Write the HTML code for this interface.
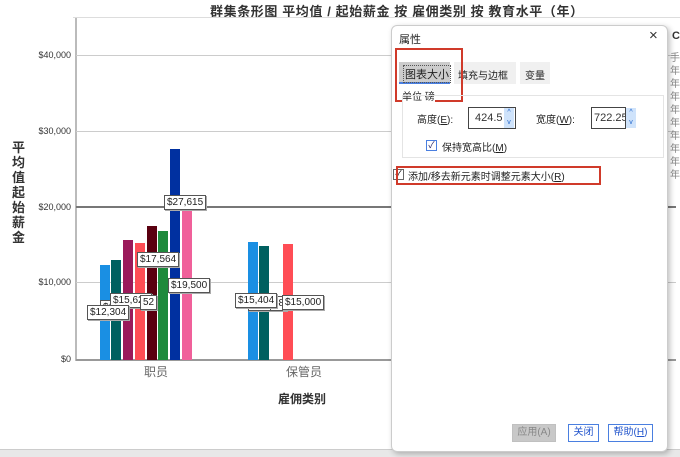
<!DOCTYPE html>
<html><head><meta charset="utf-8"><style>
*{margin:0;padding:0;box-sizing:border-box}
body{width:680px;height:457px;background:#fff;position:relative;overflow:hidden;font-family:"Liberation Sans","Noto Sans CJK SC",sans-serif;}
.a{position:absolute}
.grid{position:absolute;left:76px;width:600px;height:1px;background:#ccc}
.ylab{position:absolute;right:609px;font-size:9px;color:#333;text-align:right;width:60px}
.bar{position:absolute;width:10px;bottom:97px}
.tag{position:absolute;font-size:10px;background:#fff;border:1px solid #555;padding:0 2px;color:#222;line-height:13px;box-shadow:1px 1px 0 #aaa}
.btn{position:absolute;font-size:10px;height:18px;line-height:16px;text-align:center;border:1px solid #4a7fe0;color:#2255cc;background:#fff}
.yr{position:absolute;left:670px;font-size:10px;color:#888}
</style></head><body>
<div class="a" style="left:210px;top:1px;font-size:13px;font-weight:bold;color:#333;letter-spacing:0.6px;white-space:nowrap">群集条形图 平均值 / 起始薪金 按 雇佣类别 按 教育水平（年）</div>
<div class="a" style="left:73px;top:17px;width:620px;height:1px;background:#ddd"></div>
<div class="a" style="left:75px;top:18px;width:2px;height:343px;background:#bbb"></div>
<div class="grid" style="top:55px"></div>
<div class="grid" style="top:131px"></div>
<div class="grid" style="top:206px;height:2px;background:#777"></div>
<div class="grid" style="top:282px"></div>
<div class="a" style="left:76px;top:359px;width:600px;height:2px;background:#999"></div>
<div class="ylab" style="top:50px">$40,000</div>
<div class="ylab" style="top:126px">$30,000</div>
<div class="ylab" style="top:202px">$20,000</div>
<div class="ylab" style="top:277px">$10,000</div>
<div class="ylab" style="top:354px">$0</div>
<div class="a" style="left:12px;top:140px;width:14px;font-size:13px;font-weight:bold;line-height:15px;color:#333">平均值起始薪金</div>
<div class="bar" style="left:100px;top:265px;background:#1a8fe3"></div>
<div class="bar" style="left:111px;top:260px;background:#006060"></div>
<div class="bar" style="left:123px;top:240px;background:#9b1a5a"></div>
<div class="bar" style="left:135px;top:243px;background:#ff4d55"></div>
<div class="bar" style="left:147px;top:226px;background:#5a0010"></div>
<div class="bar" style="left:158px;top:231px;background:#1e8a3c"></div>
<div class="bar" style="left:170px;top:149px;background:#0030a0"></div>
<div class="bar" style="left:182px;top:210px;background:#f0609a"></div>
<div class="bar" style="left:248px;top:242px;background:#1a8fe3"></div>
<div class="bar" style="left:259px;top:246px;background:#006060"></div>
<div class="bar" style="left:283px;top:244px;background:#ff4d55"></div>
<div class="tag" style="left:100px;top:300px">$13</div>
<div class="tag" style="left:110px;top:293px">$15,625</div>
<div class="tag" style="left:140px;top:295px">52</div>
<div class="tag" style="left:87px;top:305px">$12,304</div>
<div class="tag" style="left:137px;top:252px">$17,564</div>
<div class="tag" style="left:168px;top:278px">$19,500</div>
<div class="tag" style="left:164px;top:195px">$27,615</div>
<div class="tag" style="left:248px;top:296px">$15,</div>
<div class="tag" style="left:270px;top:296px">58</div>
<div class="tag" style="left:282px;top:295px">$15,000</div>
<div class="tag" style="left:235px;top:293px">$15,404</div>
<div class="a" style="left:144px;top:363px;font-size:12px;color:#666">职员</div>
<div class="a" style="left:286px;top:363px;font-size:12px;color:#666">保管员</div>
<div class="a" style="left:278px;top:390px;font-size:12px;font-weight:bold;color:#333">雇佣类别</div>
<div class="a" style="left:0;top:449px;width:680px;height:8px;background:#e8e8e8;border-top:1px solid #ccc"></div>
<div class="a" style="left:672px;top:30px;font-size:11px;font-weight:bold;color:#333">C</div>
<div class="yr" style="top:49px">手</div><div class="yr" style="top:62px">年</div><div class="yr" style="top:75px">年</div><div class="yr" style="top:88px">年</div><div class="yr" style="top:101px">年</div><div class="yr" style="top:114px">年</div><div class="yr" style="top:127px">年</div><div class="yr" style="top:140px">年</div><div class="yr" style="top:153px">年</div><div class="yr" style="top:166px">年</div>
<div class="a" style="left:391px;top:25px;width:277px;height:427px;background:#fff;border:1px solid #ccc;border-radius:6px;box-shadow:2px 2px 6px rgba(0,0,0,.25)">
 <div class="a" style="left:7px;top:5px;font-size:11px;color:#222">属性</div>
 <div class="a" style="left:257px;top:1px;font-size:15px;color:#333">×</div>
 <div class="a" style="left:7px;top:36px;width:51px;height:22px;background:#ccc;border-bottom:2px solid #4a7fe0"></div>
 <div class="a" style="left:11px;top:39px;font-size:11px;color:#222;border:1px dotted #555;padding:0 1px">图表大小</div>
 <div class="a" style="left:62px;top:36px;width:62px;height:22px;background:#f0f0f0"></div>
 <div class="a" style="left:66px;top:41px;font-size:10px;color:#222">填充与边框</div>
 <div class="a" style="left:128px;top:36px;width:30px;height:22px;background:#f0f0f0"></div>
 <div class="a" style="left:133px;top:41px;font-size:10px;color:#222">变量</div>
 <div class="a" style="left:3px;top:22px;width:68px;height:54px;border:2px solid #d03a2a"></div>
 <div class="a" style="left:10px;top:62px;font-size:10px;color:#222;background:#fff">单位 磅</div>
 <div class="a" style="left:10px;top:69px;width:262px;height:63px;border:1px solid #e4e4e4"></div>
 <div class="a" style="left:25px;top:85px;font-size:10px;color:#222">高度(<u>E</u>):</div>
 <div class="a" style="left:76px;top:81px;width:48px;height:22px;border:1px solid #444;font-size:11px;padding:4px 0 0 6px;color:#333">424.5</div>
 <div class="a" style="left:112px;top:82px;width:10px;height:20px;background:#cfe3fb;font-size:7px;color:#26c;text-align:center;line-height:10px">^<br>v</div>
 <div class="a" style="left:144px;top:85px;font-size:10px;color:#222">宽度(<u>W</u>):</div>
 <div class="a" style="left:199px;top:81px;width:35px;height:22px;border:1px solid #444;font-size:11px;padding:4px 0 0 2px;color:#333;overflow:hidden">722.25</div>
 <div class="a" style="left:234px;top:82px;width:10px;height:20px;background:#cfe3fb;font-size:7px;color:#26c;text-align:center;line-height:10px">^<br>v</div>
 <div class="a" style="left:34px;top:114px;width:11px;height:11px;border:1px solid #4a7fe0;font-size:9px;line-height:9px;color:#226;text-align:center">✓</div>
 <div class="a" style="left:50px;top:113px;font-size:10px;color:#222">保持宽高比(<u>M</u>)</div>
 <div class="a" style="left:1px;top:143px;width:11px;height:11px;border:1px solid #666;font-size:9px;line-height:9px;text-align:center">✓</div>
 <div class="a" style="left:16px;top:142px;font-size:10px;color:#222">添加/移去新元素时调整元素大小(<u>R</u>)</div>
 <div class="a" style="left:4px;top:140px;width:205px;height:19px;border:2px solid #d03a2a"></div>
 <div class="btn" style="left:120px;top:398px;width:44px;background:#c8c8c8;border-color:#c0c0c0;color:#888">应用(A)</div>
 <div class="btn" style="left:176px;top:398px;width:31px">关闭</div>
 <div class="btn" style="left:216px;top:398px;width:45px">帮助(<u>H</u>)</div>
</div>
</body></html>
